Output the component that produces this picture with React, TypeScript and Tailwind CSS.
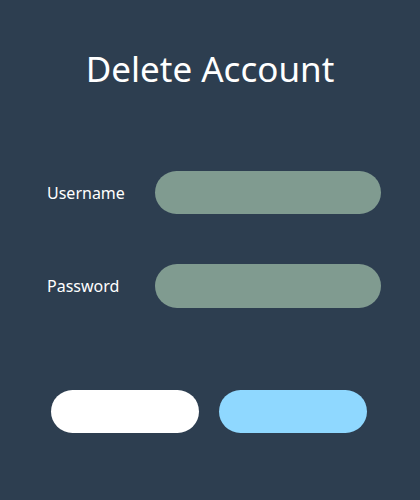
import React from 'react';

const App: React.FC = () => {
  return (
    <div className="w-full h-[500px] bg-[#2d3e50] flex flex-col font-['Noto_Sans',sans-serif] text-white">
      <h1 className="mt-[46px] text-center text-[35px] leading-[46px] font-normal">Delete Account</h1>

      <div className="mt-[79px] flex flex-col gap-[50px] pl-[47px]">
        <div className="flex items-center h-[43px]">
          <label className="w-[108px] text-[16px]">Username</label>
          <input type="text" className="w-[226px] h-[43px] rounded-full bg-[#809b90] outline-none px-4" />
        </div>
        <div className="flex items-center h-[44px]">
          <label className="w-[108px] text-[16px]">Password</label>
          <input type="password" className="w-[226px] h-[44px] rounded-full bg-[#809b90] outline-none px-4" />
        </div>
      </div>

      <div className="mt-[82px] flex gap-[20px] pl-[51px]">
        <button className="w-[148px] h-[43px] rounded-full bg-white"></button>
        <button className="w-[148px] h-[43px] rounded-full bg-[#8fd8ff]"></button>
      </div>
    </div>
  );
};

export default App;
